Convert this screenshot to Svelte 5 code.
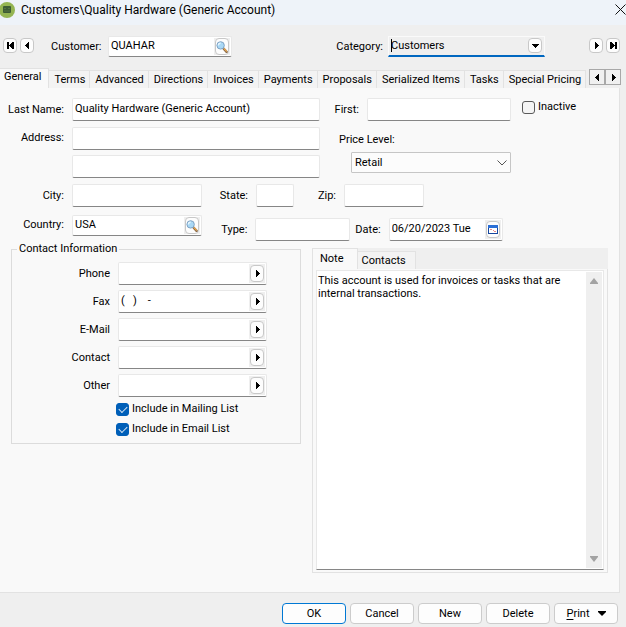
<script>
  // Customer record
  let customer = $state({
    code: 'QUAHAR',
    category: 'Customers',
    lastName: 'Quality Hardware (Generic Account)',
    first: '',
    inactive: false,
    address1: '',
    address2: '',
    priceLevel: 'Retail',
    city: '',
    state: '',
    zip: '',
    country: 'USA',
    type: '',
    date: '06/20/2023 Tue',
    mailingList: true,
    emailList: true,
    note: 'This account is used for invoices or tasks that are internal transactions.'
  });

  let contacts = $state([
    { id: 'phone', label: 'Phone', value: '' },
    { id: 'fax', label: 'Fax', value: '(   )    -' },
    { id: 'email', label: 'E-Mail', value: '' },
    { id: 'contact', label: 'Contact', value: '' },
    { id: 'other', label: 'Other', value: '' }
  ]);

  const tabs = [
    'General', 'Terms', 'Advanced', 'Directions', 'Invoices', 'Payments',
    'Proposals', 'Serialized Items', 'Tasks', 'Special Pricing'
  ];
  const noteTabs = ['Note', 'Contacts'];

  let activeTab = $state('General');
  let activeNoteTab = $state('Note');
</script>

{#snippet arrow(dir, bar = false)}
  <svg class="arrow" class:left={dir === 'left'} viewBox="0 0 9 9" width="9" height="9" aria-hidden="true" shape-rendering="crispEdges">
    {#if bar}
      <path d="M1 1h2v1h1v1h1v1h1V1h2v7H6V5H5v1H4v1H3v1H1z" />
    {:else}
      <path d="M3 1h1v1h1v1h1v1h1v1H6v1H5v1H4v1H3z" />
    {/if}
  </svg>
{/snippet}

{#snippet magnifier()}
  <svg viewBox="0 0 12 12" width="12" height="12" aria-hidden="true">
    <path d="M7 7l3.600 3.800" stroke="#8a6a48" stroke-width="2.4" stroke-linecap="round" />
    <path d="M8 7.600l2.400 2.400" stroke="#e8a850" stroke-width="1.3" stroke-linecap="round" />
    <circle cx="4.6" cy="4.4" r="3.7" fill="#a9d8f5" stroke="#7fa3c4" stroke-width="1" />
    <path d="M2.400 4.400a2.300 2.300 0 0 1 2.200-2.200" fill="none" stroke="#e9f7ff" stroke-width="1.2" />
  </svg>
{/snippet}

<div class="window">
  <header class="titlebar">
    <svg class="logo" viewBox="0 0 18 18" width="18" height="18" aria-hidden="true">
      <circle cx="7" cy="9" r="8" fill="#94b553" />
      <rect x="3" y="5" width="8" height="7" rx="1" fill="#3d5c36" />
      <path d="M4 7.500h2M8 7.500h2M4 10h6" stroke="#55753f" />
    </svg>
    <h1>Customers\Quality Hardware (Generic Account)</h1>
    <button class="close" aria-label="Close">
      <svg viewBox="0 0 11 11" width="11" height="11" aria-hidden="true">
        <path d="M.5.5l10 10M10.500.5l-10 10" stroke="#111" />
      </svg>
    </button>
  </header>

  <div class="toolbar">
    <div class="nav">
      <button class="mini" aria-label="First record">{@render arrow('left', true)}</button>
      <button class="mini" aria-label="Previous record">{@render arrow('left')}</button>
    </div>
    <label class="code-label" for="code">Customer:</label>
    <div class="field code">
      <input id="code" type="text" bind:value={customer.code} />
      <span class="btn-slot"><button class="mini" aria-label="Find customer">{@render magnifier()}</button></span>
    </div>
    <label class="category-label" for="category">Category:</label>
    <div class="category">
      <select id="category" bind:value={customer.category}>
        <option>Customers</option>
      </select>
      <span class="mini drop">
        <svg viewBox="0 0 7 4" width="7" height="4" shape-rendering="crispEdges"><path d="M0 0h7v1H6v1H5v1H4v1H3V3H2V2H1V1H0z" /></svg>
      </span>
    </div>
    <div class="nav right">
      <button class="mini" aria-label="Next record">{@render arrow('right')}</button>
      <button class="mini" aria-label="Last record">{@render arrow('right', true)}</button>
    </div>
  </div>

  <div class="tabbar">
    <div class="tabs" role="tablist">
      {#each tabs as tab}
        <button
          class="tab"
          class:active={activeTab === tab}
          role="tab"
          aria-selected={activeTab === tab}
          onclick={() => (activeTab = tab)}
        >{tab}</button>
      {/each}
    </div>
    <div class="scrollers">
      <button aria-label="Scroll tabs left">{@render arrow('left')}</button>
      <button aria-label="Scroll tabs right">{@render arrow('right')}</button>
    </div>
  </div>

  <main class="page">
    <div class="top">
      <label for="last">Last Name:</label>
      <div class="field"><input id="last" type="text" bind:value={customer.lastName} /></div>
      <label for="first">First:</label>
      <div class="field"><input id="first" type="text" bind:value={customer.first} /></div>
      <label class="check"><input type="checkbox" bind:checked={customer.inactive} />Inactive</label>

      <label for="address1">Address:</label>
      <div class="address">
        <div class="field"><input id="address1" type="text" bind:value={customer.address1} /></div>
        <div class="field"><input type="text" aria-label="Address line 2" bind:value={customer.address2} /></div>
      </div>
      <div class="price">
        <label for="price">Price Level:</label>
        <div class="price-select">
          <select id="price" bind:value={customer.priceLevel}>
            <option>Retail</option>
          </select>
          <svg viewBox="0 0 10 6" width="10" height="6" aria-hidden="true"><path d="M.5.5L5 5l4.500-4.500" fill="none" stroke="#555" /></svg>
        </div>
      </div>
    </div>

    <div class="row city">
      <label for="city">City:</label>
      <div class="field"><input id="city" type="text" bind:value={customer.city} /></div>
      <label for="state">State:</label>
      <div class="field"><input id="state" type="text" bind:value={customer.state} /></div>
      <label for="zip">Zip:</label>
      <div class="field"><input id="zip" type="text" bind:value={customer.zip} /></div>
    </div>

    <div class="row country">
      <label for="country">Country:</label>
      <div class="field">
        <input id="country" type="text" bind:value={customer.country} />
        <span class="btn-slot"><button class="mini" aria-label="Find country">{@render magnifier()}</button></span>
      </div>
      <label for="type">Type:</label>
      <div class="field"><input id="type" type="text" bind:value={customer.type} /></div>
      <label for="date">Date:</label>
      <div class="field">
        <input id="date" type="text" bind:value={customer.date} />
        <span class="btn-slot">
          <button class="mini" aria-label="Pick date">
            <svg viewBox="0 0 10 9" width="10" height="9" aria-hidden="true" shape-rendering="crispEdges">
              <rect width="10" height="9" fill="#17479e" />
              <rect width="10" height="3" fill="#2b6fd6" />
              <rect x="1" y="3" width="8" height="5" fill="#fff" />
              <path d="M2 4h2v1H2zM5 5h1v1H5zM6 6h2v1H6z" fill="#e88a8a" />
            </svg>
          </button>
        </span>
      </div>
    </div>

    <div class="lower">
      <fieldset>
        <legend>Contact Information</legend>
        {#each contacts as item}
          <div class="contact">
            <label for={item.id}>{item.label}</label>
            <div class="field">
              <input id={item.id} type="text" bind:value={item.value} />
              <span class="btn-slot"><button class="mini" aria-label="{item.label} options">{@render arrow('right')}</button></span>
            </div>
          </div>
        {/each}
        <div class="lists">
          <label class="check"><input type="checkbox" bind:checked={customer.mailingList} />Include in Mailing List</label>
          <label class="check"><input type="checkbox" bind:checked={customer.emailList} />Include in Email List</label>
        </div>
      </fieldset>

      <section class="notes">
        <div class="tabs" role="tablist">
          {#each noteTabs as tab}
            <button
              class="tab"
              class:active={activeNoteTab === tab}
              role="tab"
              aria-selected={activeNoteTab === tab}
              onclick={() => (activeNoteTab = tab)}
            >{tab}</button>
          {/each}
        </div>
        <div class="note-panel">
          <div class="note-box">
            <textarea aria-label="Note" bind:value={customer.note}></textarea>
            <div class="scrollbar">
              <svg viewBox="0 0 8 6" width="8" height="6" aria-hidden="true"><path d="M4 0l4 5v1H0V5z" fill="#a3a3a3" /></svg>
              <svg viewBox="0 0 8 6" width="8" height="6" aria-hidden="true"><path d="M4 6l4-5V0H0v1z" fill="#a3a3a3" /></svg>
            </div>
          </div>
        </div>
      </section>
    </div>
  </main>

  <footer>
    <button class="primary">OK</button>
    <button>Cancel</button>
    <button>New</button>
    <button>Delete</button>
    <button class="print">
      <span><u>P</u>rint</span>
      <svg viewBox="0 0 8 5" width="8" height="5" aria-hidden="true"><path d="M0 0h8v1L4 5 0 1z" /></svg>
    </button>
  </footer>
</div>

<style>
  :global(body) {
    background: #efefef;
  }

  .window {
    display: flex;
    flex-direction: column;
    min-height: 100vh;
    background: #efefef;
    color: #000;
    font-family: Roboto, 'Liberation Sans', sans-serif;
    font-size: 11px;
    line-height: 14px;
  }

  .window * {
    box-sizing: border-box;
  }

  button,
  input,
  select,
  textarea {
    margin: 0;
    color: inherit;
    font: inherit;
  }

  label {
    white-space: nowrap;
  }

  /* Title bar */
  .titlebar {
    display: flex;
    align-items: center;
    height: 25px;
    padding-bottom: 6px;
    background: #eef3f9;
  }

  h1 {
    flex: 1;
    margin: 0 0 0 3px;
    font-size: 12px;
    font-weight: 400;
    line-height: 18px;
  }

  .close {
    display: flex;
    padding: 0 0 0 8px;
    border: none;
    background: none;
  }

  /* Toolbar */
  .toolbar {
    display: flex;
    align-items: center;
    height: 43px;
    padding: 0 6px 0 3px;
  }

  .nav {
    display: flex;
    gap: 3px;
    width: 48px;
    padding-bottom: 2px;
  }

  .nav.right {
    justify-content: flex-end;
    width: 75px;
  }

  .mini {
    display: flex;
    align-items: center;
    justify-content: center;
    width: 14px;
    height: 15px;
    padding: 0;
    border: 1px solid #c8c8c8;
    border-radius: 4px;
    background: #fdfdfd;
  }

  .arrow.left {
    transform: scaleX(-1);
  }

  .field {
    display: flex;
    min-width: 0;
    height: 23px;
    border: 1px solid #e8e8e8;
    border-bottom-color: #868686;
    border-radius: 2px;
    background: #fff;
  }

  .field input {
    flex: 1;
    width: 0;
    min-width: 0;
    padding: 0 2px 2px;
    border: none;
    outline: none;
    background: none;
  }

  .btn-slot {
    display: flex;
    align-items: center;
    margin: 1px;
    padding: 0 1px;
    background: #efefef;
  }

  .btn-slot .mini {
    height: 17px;
  }

  .toolbar .code {
    width: 124px;
    height: 21px;
    margin-left: 7px;
  }

  .code-label {
    width: 50px;
    text-align: right;
  }

  .category-label {
    margin-left: auto;
  }

  .category {
    position: relative;
    width: 157px;
    margin-left: 5px;
  }

  .category::before {
    content: '';
    position: absolute;
    top: 3px;
    left: 3px;
    width: 1px;
    height: 13px;
    background: #000;
  }

  .category select {
    display: block;
    width: 100%;
    height: 21px;
    padding: 0 20px 0 2px;
    border: 1px solid #fafafa;
    border-bottom: 2px solid #0067c0;
    outline: none;
    background: #efefef;
    appearance: none;
  }

  .drop {
    position: absolute;
    top: 2px;
    right: 3px;
    pointer-events: none;
  }

  /* Tabs */
  .tabbar {
    display: flex;
    justify-content: space-between;
    padding-right: 5px;
  }

  .tabs {
    display: flex;
    align-items: flex-end;
    height: 20px;
  }

  .tab {
    height: 18px;
    padding: 0 4px 0 5px;
    border: 1px solid #e2e2e2;
    border-left: none;
    border-bottom: none;
    background: #f3f3f3;
    white-space: nowrap;
  }

  .tab.active {
    height: 20px;
    padding: 0 7px 3px 4px;
    background: #f9f9f9;
  }

  .scrollers {
    display: flex;
    align-items: flex-start;
    padding-top: 1px;
  }

  .scrollers button {
    display: flex;
    align-items: center;
    justify-content: center;
    width: 16px;
    height: 16px;
    padding: 0;
    border: 1px solid #a8a8a8;
    background: #f0f0f0;
  }

  /* General page */
  .page {
    display: flex;
    flex: 1;
    flex-direction: column;
    margin-right: 6px;
    padding: 10px 0 19px;
    border-right: 1px solid #e2e2e2;
    border-bottom: 1px solid #e2e2e2;
    background: #f9f9f9;
  }

  .top,
  .row {
    display: grid;
    align-items: center;
  }

  .top > label:not(.check),
  .row > label {
    padding-right: 8px;
    text-align: right;
  }

  .top {
    grid-template-columns: 72px 248fr 47px 144fr 108px;
    row-gap: 6px;
  }

  .top > label[for='address1'] {
    align-self: start;
    padding-top: 4px;
  }

  .top > .check {
    align-self: start;
    padding: 2px 0 0 11px;
  }

  .check {
    display: flex;
    align-items: center;
    gap: 3px;
  }

  .check input {
    display: grid;
    place-items: center;
    width: 13px;
    height: 13px;
    border: 1px solid #5a5a5a;
    border-radius: 3px;
    background: #f5f5f5;
    appearance: none;
  }

  .check input:checked {
    border-color: #005fb8;
    background: #005fb8;
  }

  .check input:checked::before {
    content: '';
    width: 7px;
    height: 4px;
    margin-bottom: 2px;
    border: solid #d5e5f5;
    border-width: 0 0 1px 1px;
    transform: rotate(-45deg);
  }

  .address {
    display: grid;
    gap: 5px;
  }

  .price {
    grid-column: 3 / 5;
    align-self: start;
    padding: 6px 0 0 19px;
  }

  .price-select {
    position: relative;
    margin: 5px 0 0 12px;
  }

  .price-select select {
    display: block;
    width: 100%;
    height: 21px;
    padding: 0 3px;
    border: 1px solid #c6c6c6;
    border-radius: 1px;
    background: #fcfcfc;
    appearance: none;
  }

  .price-select svg {
    position: absolute;
    top: 8px;
    right: 4px;
    pointer-events: none;
  }

  .city {
    grid-template-columns: 72px 130fr 54px 38fr 50px 80fr 195px;
    margin-top: 6px;
  }

  .country {
    grid-template-columns: 72px 130fr 53px 94fr 39px 114fr 116px;
    min-height: 26px;
    margin-top: 8px;
  }

  .country > * {
    align-self: end;
  }

  .country > label {
    padding-bottom: 4px;
  }

  .country > :nth-child(-n + 2) {
    align-self: start;
  }

  .country > label:first-child {
    padding-top: 3px;
  }

  .country > .field:nth-child(2) {
    height: 21px;
  }

  .lower {
    display: grid;
    flex: 1;
    grid-template-columns: 290fr 296fr;
    gap: 11px;
    margin-top: 7px;
    padding: 0 11px;
  }

  fieldset {
    align-self: start;
    min-width: 0;
    margin: -6px 0 0;
    padding: 6px 33px 7px 0;
    border: 1px solid #dcdcdc;
  }

  legend {
    margin-left: 5px;
    padding: 0 2px;
  }

  .contact {
    display: grid;
    grid-template-columns: 106px 1fr;
    align-items: center;
    margin-bottom: 5px;
  }

  .contact label {
    padding-right: 8px;
    text-align: right;
  }

  .lists {
    display: grid;
    gap: 6px;
    padding-left: 104px;
  }

  /* Notes */
  .notes {
    display: flex;
    flex-direction: column;
    background: #efefef;
  }

  .notes .tabs {
    height: 21px;
  }

  .notes .tab {
    padding: 0 9px 0 4px;
  }

  .notes .tab.active {
    height: 21px;
    padding: 0 13px 1px 7px;
    border-left: 1px solid #e2e2e2;
  }

  .note-panel {
    display: flex;
    flex: 1;
    padding: 1px 3px 2px;
    border: 1px solid #e2e2e2;
    border-top: none;
    background: #f9f9f9;
  }

  .note-box {
    display: flex;
    flex: 1;
    border: 1px solid #e8e8e8;
    border-bottom-color: #868686;
    background: #fff;
  }

  textarea {
    flex: 1;
    min-width: 0;
    padding: 3px 1px;
    border: none;
    outline: none;
    background: none;
    line-height: 13px;
    resize: none;
    overflow: hidden;
  }

  .scrollbar {
    display: flex;
    flex-direction: column;
    align-items: center;
    justify-content: space-between;
    width: 16px;
    margin: 1px;
    padding: 6px 0;
    background: #efefef;
  }

  /* Bottom buttons */
  footer {
    display: flex;
    justify-content: flex-end;
    gap: 4px;
    padding: 10px 8px 3px;
  }

  footer button {
    width: 64px;
    height: 21px;
    padding: 0;
    border: 1px solid #cccccc;
    border-radius: 4px;
    background: #fdfdfd;
  }

  footer .primary {
    border-color: #0078d4;
  }

  footer .print {
    display: flex;
    align-items: center;
    justify-content: center;
    gap: 8px;
  }

  u {
    text-underline-offset: 2px;
  }
</style>
